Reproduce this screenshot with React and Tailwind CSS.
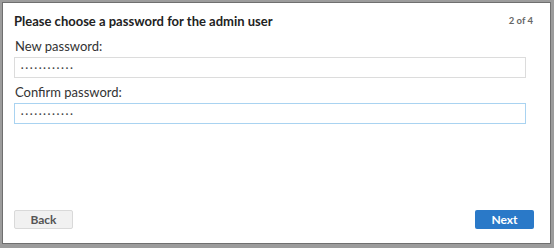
import React from 'react';

const PasswordField = ({ label, focused }) => (
  <div>
    <p className="text-[13px] leading-[16px] text-[#333] pl-[1px]">{label}</p>
    <div
      className={
        'mt-[3px] h-[21px] w-[512px] bg-white flex items-center pl-[6px] border ' +
        (focused ? 'border-[#a9d3f1]' : 'border-[#dcdcdc]')
      }
    >
      <span className="text-[9px] leading-none text-[#444] tracking-[2px] font-bold">············</span>
    </div>
  </div>
);

const App = () => {
  return (
    <div className="w-[554px] h-[248px] bg-[#9c9c9c] pt-[2px] pl-[2px] pr-[3px] pb-[4px] font-['Lato','Open_Sans',sans-serif]">
      <div className="h-full w-full bg-white border border-[#6f6f6f] flex flex-col px-[11px]">
        <div className="flex items-center justify-between h-[32px] pt-[5px]">
          <p className="text-[13px] font-bold text-[#222]">Please choose a password for the admin user</p>
          <p className="text-[9.5px] font-bold text-[#666] pr-[6px]">2 of 4</p>
        </div>

        <div className="flex flex-col gap-[6px] pt-[3px]">
          <PasswordField label="New password:" />
          <PasswordField label="Confirm password:" focused />
        </div>

        <div className="mt-auto mb-[14px] flex justify-between pr-[5px]">
          <button className="w-[59px] h-[19px] bg-[#f1f1f1] border border-[#d9d9d9] rounded-[2px] text-[12px] font-bold text-[#555] leading-none">
            Back
          </button>
          <button className="w-[59px] h-[19px] bg-[#2a79c8] rounded-[2px] text-[12px] font-bold text-white leading-none">
            Next
          </button>
        </div>
      </div>
    </div>
  );
};

export default App;
